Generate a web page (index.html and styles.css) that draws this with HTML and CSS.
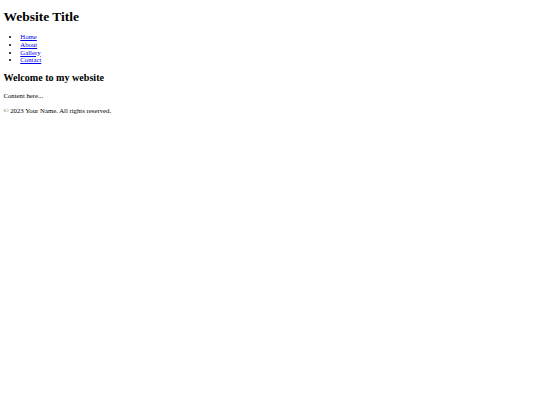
FILE: index.html
```html
<!DOCTYPE html>
<html>
<head>
<meta charset="utf-8">
<title>Website Title</title>
<link rel="stylesheet" href="styles.css">
</head>
<body class="site">
<header class="site-header">
<h1 class="site-title">Website Title</h1>
<nav class="site-nav">
<ul class="nav-list">
<li><a href="#">Home</a></li>
<li><a href="#">About</a></li>
<li><a href="#">Gallery</a></li>
<li><a href="#">Contact</a></li>
</ul>
</nav>
</header>
<main class="site-main">
<h2 class="main-title">Welcome to my website</h2>
<p class="main-text">Content here...</p>
</main>
<footer class="site-footer">
<p class="footer-text">© 2023 Your Name. All rights reserved.</p>
</footer>
</body>
</html>
```
FILE: styles.css
```css
.site {
  margin: 3.4px;
  font-family: "Liberation Serif", "Times New Roman", serif;
  font-size: 6.75px;
  line-height: 7.6px;
  color: #000;
  background: #fff;
}
.site-title {
  font-size: 13.5px;
  line-height: 15px;
  margin: 6px 0 9px;
}
.nav-list {
  margin: 6.75px 0 7.75px;
  padding-left: 16.9px;
}
.nav-list a {
  color: #0000ee;
}
.main-title {
  font-size: 10.1px;
  line-height: 11.6px;
  margin: 7.5px 0 8.5px;
}
.main-text,
.footer-text {
  margin: 7.5px 0;
}
```
